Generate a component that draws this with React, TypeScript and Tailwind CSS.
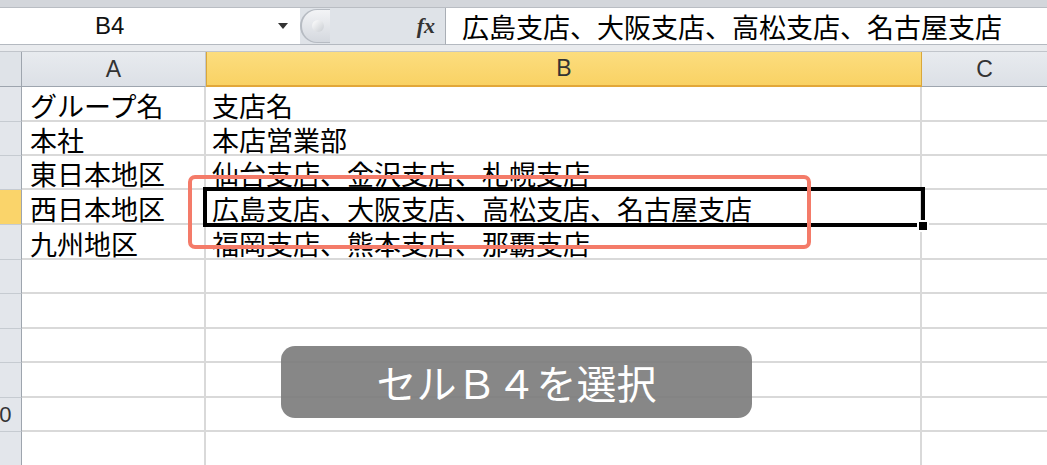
import React from "react";

const rows = [
  { h: "h-[35px]", a: "グループ名", b: "支店名" },
  { h: "h-[34px]", a: "本社", b: "本店営業部" },
  { h: "h-[34px]", a: "東日本地区", b: "仙台支店、金沢支店、札幌支店" },
  { h: "h-[35px]", a: "西日本地区", b: "広島支店、大阪支店、高松支店、名古屋支店", sel: true },
  { h: "h-[35px]", a: "九州地区", b: "福岡支店、熊本支店、那覇支店" },
  { h: "h-[34px]", a: "", b: "" },
  { h: "h-[35px]", a: "", b: "" },
  { h: "h-[34px]", a: "", b: "" },
  { h: "h-[35px]", a: "", b: "" },
  { h: "h-[34px]", a: "", b: "", num: "10" },
  { h: "h-[35px]", a: "", b: "" },
];

export default function App() {
  return (
    <div
      className="w-[1047px] h-[465px] overflow-hidden bg-white text-black"
      style={{ fontFamily: '"Noto Sans CJK JP", "Liberation Sans", sans-serif' }}
    >
      {/* formula bar */}
      <div className="flex flex-col h-[52px] bg-[#dfe2e6]">
        <div className="h-[8px] bg-[#d3d6db] border-b border-[#b9bdc3]" />
        <div className="flex h-[37px]">
          <div className="relative w-[300px] bg-white flex items-center border-b border-[#b4b9c0]">
            <span className="pl-[95px] text-[24px] leading-none text-[#111]" style={{ fontFamily: '"Liberation Sans", sans-serif' }}>
              B4
            </span>
            <span className="ml-auto mr-[12px] w-0 h-0 border-l-[5px] border-r-[5px] border-t-[6px] border-l-transparent border-r-transparent border-t-[#333]" />
          </div>
          <div className="w-[146px] flex items-center bg-[#dfe3e8] border-b border-[#b4b9c0] border-r border-r-[#a9aeb5]">
            <div className="w-[30px] h-[34px] rounded-l-full border-l-2 border-t border-b border-[#b6bbc2] bg-gradient-to-b from-[#f3f4f6] to-[#d4d8de] flex items-center pl-[10px]">
              <div className="w-[12px] h-[12px] rounded-full bg-gradient-to-br from-white to-[#c9cdd2]" />
            </div>
            <span
              className="ml-auto mr-[10px] text-[22px] italic font-bold leading-none text-[#333]"
              style={{ fontFamily: '"Liberation Serif", serif' }}
            >
              fx
            </span>
          </div>
          <div className="flex-1 bg-white flex items-center pl-[16px] border-b border-[#b4b9c0]">
            <span className="text-[27px] leading-none whitespace-nowrap">広島支店、大阪支店、高松支店、名古屋支店</span>
          </div>
        </div>
        <div className="h-[7px] bg-[#e9ebee] border-b border-[#c1c5cb]" />
      </div>

      {/* column headers */}
      <div className="flex h-[35px] text-[23px] text-[#333]" style={{ fontFamily: '"Liberation Sans", sans-serif' }}>
        <div className="relative w-[22px] bg-[#dfe3e8] border-r border-r-[#9ea5ae] border-b border-b-[#9ea5ae]">
          <div className="absolute right-[3px] bottom-[3px] w-0 h-0 border-l-[14px] border-t-[14px] border-l-transparent border-t-transparent border-r-0 border-b-0 border-[#c5cad0]" style={{ borderBottomWidth: 0 }} />
        </div>
        <div className="w-[184px] flex items-center justify-center bg-gradient-to-b from-[#e8ebef] to-[#dce0e6] border-r border-[#c2c7ce] border-b border-b-[#9ea5ae]">
          A
        </div>
        <div className="w-[716px] flex items-center justify-center bg-gradient-to-b from-[#fcdd7e] to-[#f9d264] border-l border-l-[#d9a73a] border-r border-r-[#d9a73a] border-b-2 border-b-[#e2a739]">
          B
        </div>
        <div className="flex-1 flex items-center justify-center bg-gradient-to-b from-[#e8ebef] to-[#dce0e6] border-b border-b-[#9ea5ae]">
          C
        </div>
      </div>

      {/* grid */}
      <div className="relative">
        {rows.map((r, i) => (
          <div key={i} className={`flex ${r.h}`}>
            <div
              className={`w-[22px] overflow-hidden border-r border-r-[#9ea5ae] border-b border-b-[#c6cbd1] flex items-center text-[22px] text-[#333] ${
                r.sel ? "bg-[#fad46a]" : "bg-[#e3e6eb]"
              }`}
              style={{ fontFamily: '"Liberation Sans", sans-serif' }}
            >
              {r.num ? <span className="-ml-[13px]">{r.num}</span> : null}
            </div>
            <div className="w-[184px] border-r-2 border-b-2 border-[#d9d9d9] flex items-end pl-[8px] pb-[1px]">
              <span className="text-[27px] leading-none whitespace-nowrap">{r.a}</span>
            </div>
            <div className="w-[716px] border-r-2 border-b-2 border-[#d9d9d9] flex items-end pl-[6px] pb-[1px]">
              <span className="text-[27px] leading-none whitespace-nowrap">{r.b}</span>
            </div>
            <div className="flex-1 border-b-2 border-[#d9d9d9]" />
          </div>
        ))}

        {/* selected cell B4 */}
        <div className="absolute left-[203px] top-[100px] w-[722px] h-[40px] border-[4px] border-black" />
        <div className="absolute left-[917px] top-[133px] w-[12px] h-[12px] bg-black border-2 border-white" />

        {/* highlight rectangle */}
        <div className="absolute left-[188px] top-[88px] w-[623px] h-[74px] border-[4px] border-[#f47b69] rounded-[7px]" />

        {/* caption */}
        <div className="absolute left-[281px] top-[259px] w-[471px] h-[72px] rounded-[14px] bg-[#7a7a7a]/90 flex items-center justify-center">
          <span className="text-[40px] leading-none text-white">セルＢ４を選択</span>
        </div>
      </div>
    </div>
  );
}
